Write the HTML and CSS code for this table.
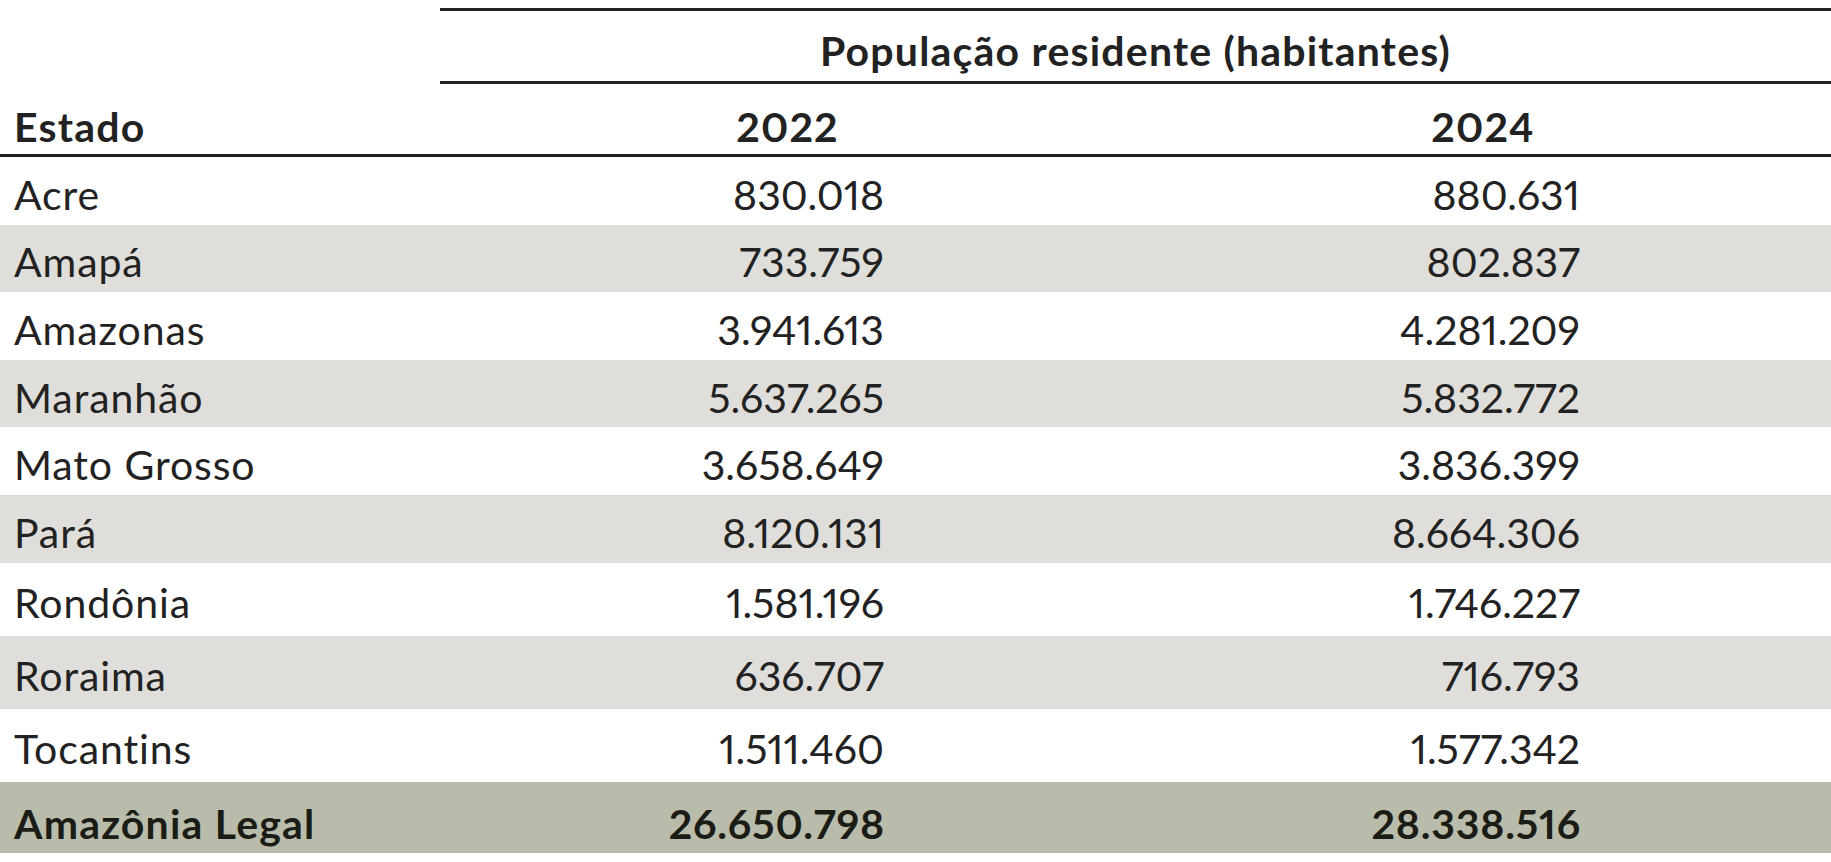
FILE: index.html
```html
<!DOCTYPE html>
<html lang="pt-BR">
<head>
<meta charset="utf-8">
<title>População residente — Amazônia Legal</title>
<link rel="stylesheet" href="styles.css">
</head>
<body>
<div class="table">
  <div class="head">
    <div class="group">População residente (habitantes)</div>
    <div class="estado">Estado</div>
    <div class="year">2022</div>
    <div class="year">2024</div>
  </div>
  <div class="row"><div class="name">Acre</div><div class="num">830.018</div><div class="num">880.631</div></div>
  <div class="row alt"><div class="name">Amapá</div><div class="num">733.759</div><div class="num">802.837</div></div>
  <div class="row"><div class="name">Amazonas</div><div class="num">3.941.613</div><div class="num">4.281.209</div></div>
  <div class="row alt"><div class="name">Maranhão</div><div class="num">5.637.265</div><div class="num">5.832.772</div></div>
  <div class="row"><div class="name">Mato Grosso</div><div class="num">3.658.649</div><div class="num">3.836.399</div></div>
  <div class="row alt"><div class="name">Pará</div><div class="num">8.120.131</div><div class="num">8.664.306</div></div>
  <div class="row tall"><div class="name">Rondônia</div><div class="num">1.581.196</div><div class="num">1.746.227</div></div>
  <div class="row tall alt"><div class="name">Roraima</div><div class="num">636.707</div><div class="num">716.793</div></div>
  <div class="row tall"><div class="name">Tocantins</div><div class="num">1.511.460</div><div class="num">1.577.342</div></div>
  <div class="row total"><div class="name">Amazônia Legal</div><div class="num">26.650.798</div><div class="num">28.338.516</div></div>
</div>
</body>
</html>
```

FILE: styles.css
```css
html, body {
  margin: 0;
  padding: 0;
  background: #ffffff;
}

body {
  font-family: "Lato", "Liberation Sans", sans-serif;
  font-size: 41px;
  line-height: 1;
  color: #222222;
  font-variant-numeric: proportional-nums;
}

.table {
  width: 1831px;
  padding-top: 8px;
}

.head {
  display: grid;
  grid-template-columns: 440px 695px 1fr;
  border-bottom: 3px solid #222222;
  font-weight: 700;
  letter-spacing: 1.2px;
}

.group {
  grid-column: 2 / 4;
  grid-row: 1;
  box-sizing: border-box;
  height: 76px;
  border-top: 3px solid #222222;
  border-bottom: 3px solid #222222;
  padding-top: 8px;
  display: flex;
  align-items: center;
  justify-content: center;
}

.estado,
.year {
  grid-row: 2;
  box-sizing: border-box;
  height: 70px;
  padding-top: 14px;
  display: flex;
  align-items: center;
}

.estado {
  grid-column: 1;
  padding-left: 14px;
}

.year {
  justify-content: center;
}

.row {
  display: grid;
  grid-template-columns: 440px 695px 1fr;
  align-items: center;
  box-sizing: border-box;
  height: 67.6px;
  padding-top: 7px;
}

.row.tall {
  height: 73px;
}

.row.alt {
  background: #dfdeda;
}

.row.total {
  height: 71.6px;
  padding-top: 13px;
  background: #b9bcaa;
  font-weight: 700;
  color: #1c1c17;
}

.name {
  padding-left: 14px;
  letter-spacing: 0.9px;
}

.total .name {
  letter-spacing: 1.2px;
}

.num {
  text-align: right;
  padding-right: 251px;
}

.total .num {
  letter-spacing: 0.8px;
  padding-right: 250px;
}
```
